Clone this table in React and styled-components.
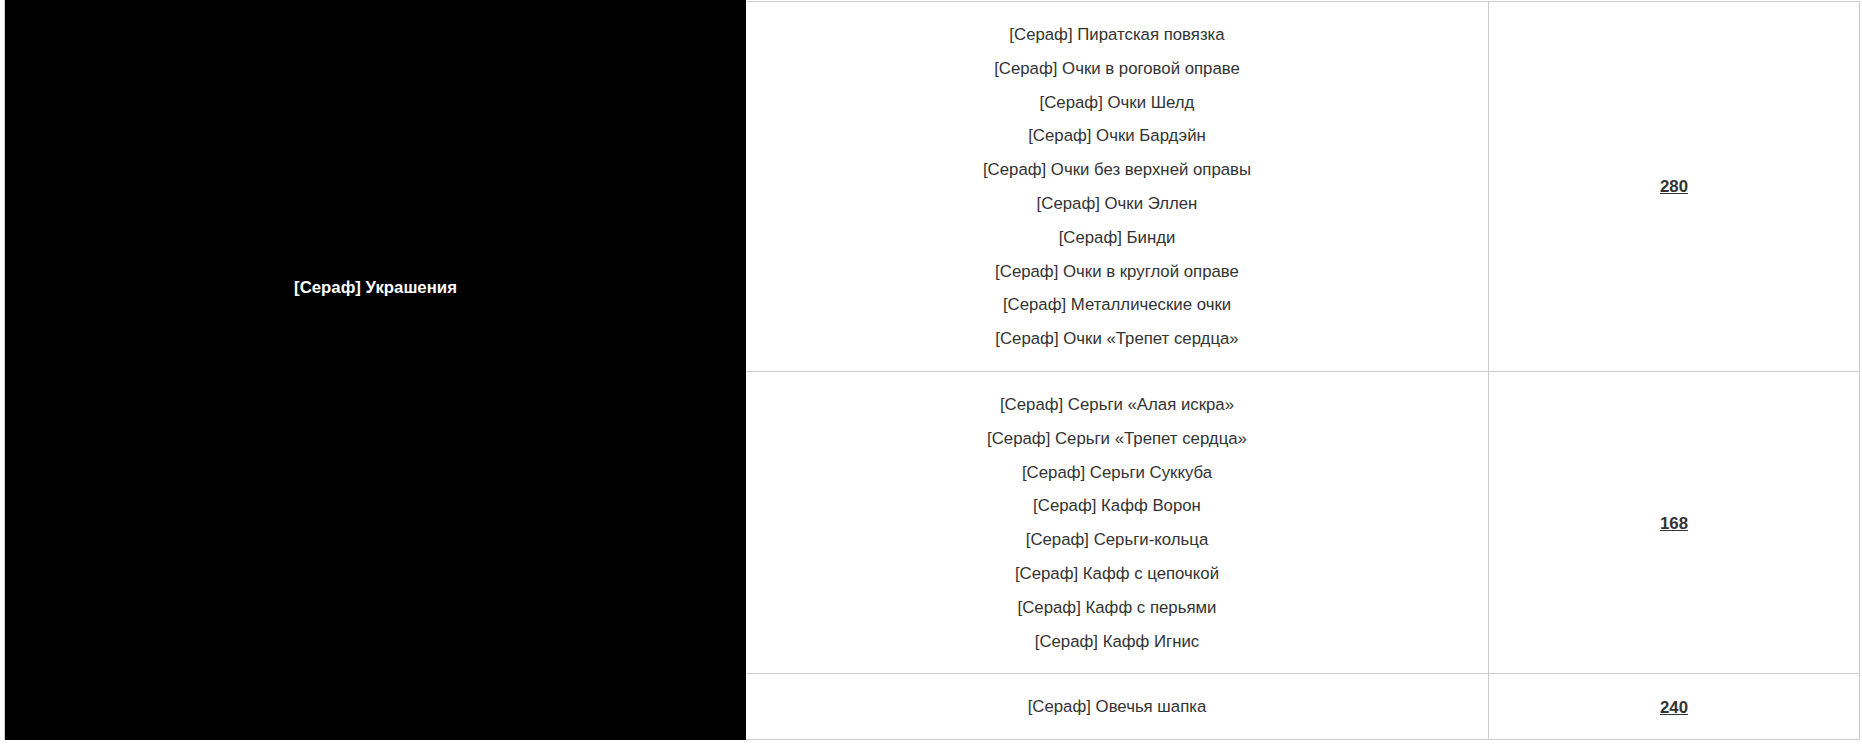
import React from 'react';
import styled, { createGlobalStyle } from 'styled-components';

const groups = [
  {
    price: 280,
    items: [
      '[Сераф] Пиратская повязка',
      '[Сераф] Очки в роговой оправе',
      '[Сераф] Очки Шелд',
      '[Сераф] Очки Бардэйн',
      '[Сераф] Очки без верхней оправы',
      '[Сераф] Очки Эллен',
      '[Сераф] Бинди',
      '[Сераф] Очки в круглой оправе',
      '[Сераф] Металлические очки',
      '[Сераф] Очки «Трепет сердца»',
    ],
  },
  {
    price: 168,
    items: [
      '[Сераф] Серьги «Алая искра»',
      '[Сераф] Серьги «Трепет сердца»',
      '[Сераф] Серьги Суккуба',
      '[Сераф] Кафф Ворон',
      '[Сераф] Серьги-кольца',
      '[Сераф] Кафф с цепочкой',
      '[Сераф] Кафф с перьями',
      '[Сераф] Кафф Игнис',
    ],
  },
  {
    price: 240,
    items: ['[Сераф] Овечья шапка'],
  },
];

const App = () => {
  return (
    <>
      <GlobalStyle />
      <Table>
        <CategoryCell>
          <CategoryName>[Сераф] Украшения</CategoryName>
        </CategoryCell>
        {groups.map((group, i) => (
          <React.Fragment key={group.price}>
            <ItemsCell $first={i === 0}>
              {group.items.map((item) => (
                <Item key={item}>{item}</Item>
              ))}
            </ItemsCell>
            <PriceCell $first={i === 0}>
              <Price href="#">{group.price}</Price>
            </PriceCell>
          </React.Fragment>
        ))}
      </Table>
    </>
  );
};

const GlobalStyle = createGlobalStyle`
  body {
    margin: 0;
    background: #fff;
    font-family: "Liberation Sans", Arial, sans-serif;
  }
`;

const Table = styled.div`
  display: grid;
  grid-template-columns: 742px 743px 371px;
  margin-left: 4px;
  width: 1856px;
`;

const CategoryCell = styled.div`
  grid-row: 1 / span 3;
  display: flex;
  align-items: center;
  justify-content: center;
  background: #000;
  border-left: 1px solid #ccc;
  padding-bottom: 165px;
`;

const CategoryName = styled.span`
  color: #fff;
  font-size: 16.8px;
  font-weight: bold;
`;

const ItemsCell = styled.div`
  display: flex;
  flex-direction: column;
  justify-content: center;
  padding: 16px 10px 15px;
  margin-top: ${(p) => (p.$first ? '1px' : '0')};
  border-top: ${(p) => (p.$first ? '1px solid #ccc' : 'none')};
  border-right: 1px solid #ccc;
  border-bottom: 1px solid #ccc;
  text-align: center;
`;

const Item = styled.div`
  font-size: 16.8px;
  line-height: 33.8px;
  color: #333;
`;

const PriceCell = styled.div`
  display: flex;
  align-items: center;
  justify-content: center;
  padding-top: 2px;
  margin-top: ${(p) => (p.$first ? '1px' : '0')};
  border-top: ${(p) => (p.$first ? '1px solid #ccc' : 'none')};
  border-right: 1px solid #ccc;
  border-bottom: 1px solid #ccc;
`;

const Price = styled.a`
  font-size: 16.8px;
  font-weight: bold;
  color: #333;
  text-decoration: underline;
`;

export default App;
